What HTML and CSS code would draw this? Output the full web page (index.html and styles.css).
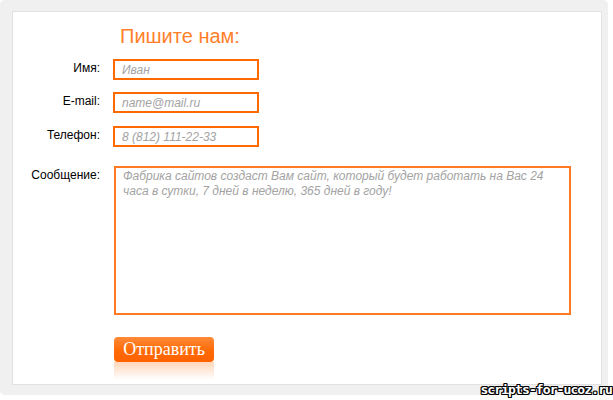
FILE: index.html
```html
<!DOCTYPE html>
<html lang="ru">
<head>
    <meta charset="UTF-8">
    <title>Пишите нам</title>
    <link rel="stylesheet" href="styles.css">
</head>
<body>
    <div class="frame">
        <form class="panel">
            <h2 class="title">Пишите нам:</h2>
            <div class="row">
                <label for="name">Имя:</label>
                <input type="text" id="name" placeholder="Иван">
            </div>
            <div class="row">
                <label for="email">E-mail:</label>
                <input type="text" id="email" placeholder="name@mail.ru">
            </div>
            <div class="row row-phone">
                <label for="phone">Телефон:</label>
                <input type="text" id="phone" placeholder="8 (812) 111-22-33">
            </div>
            <div class="row row-message">
                <label for="message">Сообщение:</label>
                <textarea id="message" placeholder="Фабрика сайтов создаст Вам сайт, который будет работать на Вас 24 часа в сутки, 7 дней в неделю, 365 дней в году!"></textarea>
            </div>
            <div class="actions">
                <button type="submit" class="send">Отправить</button>
            </div>
        </form>
    </div>
    <div class="watermark">scripts-for-ucoz.ru</div>
</body>
</html>
```

FILE: styles.css
```css
* {
    box-sizing: border-box;
}
body {
    margin: 0;
    background: #fff;
    font-family: 'Liberation Sans', Arial, sans-serif;
    font-size: 12px;
    color: #000;
    position: relative;
    height: 400px;
    overflow: hidden;
}
.frame {
    width: 608px;
    height: 395px;
    padding: 11px 6px 10px 12px;
    background: #f0f0f0;
    border-radius: 5px;
}
.panel {
    height: 100%;
    background: #fff;
    border: 1px solid #e2e2e2;
    padding: 12px 0 0 0;
}
.title {
    margin: 0 0 11px 107px;
    font-size: 20px;
    line-height: 24px;
    font-weight: normal;
    color: #ff7f2a;
}
.row {
    display: flex;
    align-items: flex-start;
    margin-bottom: 12px;
}
.row-phone {
    margin-top: 13px;
}
.row-message {
    margin-top: 19px;
    margin-bottom: 22px;
}
.row label {
    width: 87px;
    margin-right: 13px;
    padding-top: 2px;
    line-height: 14px;
    text-align: right;
}
.row input,
.row textarea {
    font-family: 'Liberation Sans', Arial, sans-serif;
    font-size: 12px;
    font-style: italic;
    border: 2px solid #ff6a00;
    outline: none;
    margin: 0;
    border-radius: 0;
}
.row input {
    width: 146px;
    height: 21px;
    padding: 0 7px;
}
.row textarea {
    width: 457px;
    height: 149px;
    margin-left: 1px;
    padding: 1px 7px 0;
    line-height: 15px;
    resize: none;
    border-color: #ff7a22;
}
.row input::placeholder,
.row textarea::placeholder {
    color: #a3a3a3;
}
.actions {
    padding-left: 101px;
}
.send {
    position: relative;
    width: 100px;
    height: 25px;
    padding: 0;
    border: none;
    border-radius: 4px;
    background: linear-gradient(#ff8a38, #ff6a06 55%, #ff6200);
    color: #fff;
    font-family: 'Liberation Serif', 'Times New Roman', serif;
    font-size: 18px;
    line-height: 25px;
    cursor: pointer;
}
.send::after {
    content: '';
    position: absolute;
    left: 0;
    top: 25px;
    width: 100%;
    height: 18px;
    border-radius: 0 0 4px 4px;
    background: linear-gradient(rgba(255, 120, 30, 0.3), rgba(255, 140, 60, 0));
}
.watermark {
    position: absolute;
    right: 1px;
    bottom: 2px;
    font-family: 'DejaVu Sans Mono', monospace;
    font-weight: bold;
    font-size: 13px;
    letter-spacing: -0.9px;
    line-height: 17px;
    color: #fff;
    text-shadow: 1px 0 0 #000, -1px 0 0 #000, 0 1px 0 #000, 0 -1px 0 #000,
        1px 1px 0 #000, -1px -1px 0 #000, 1px -1px 0 #000, -1px 1px 0 #000;
}
```
